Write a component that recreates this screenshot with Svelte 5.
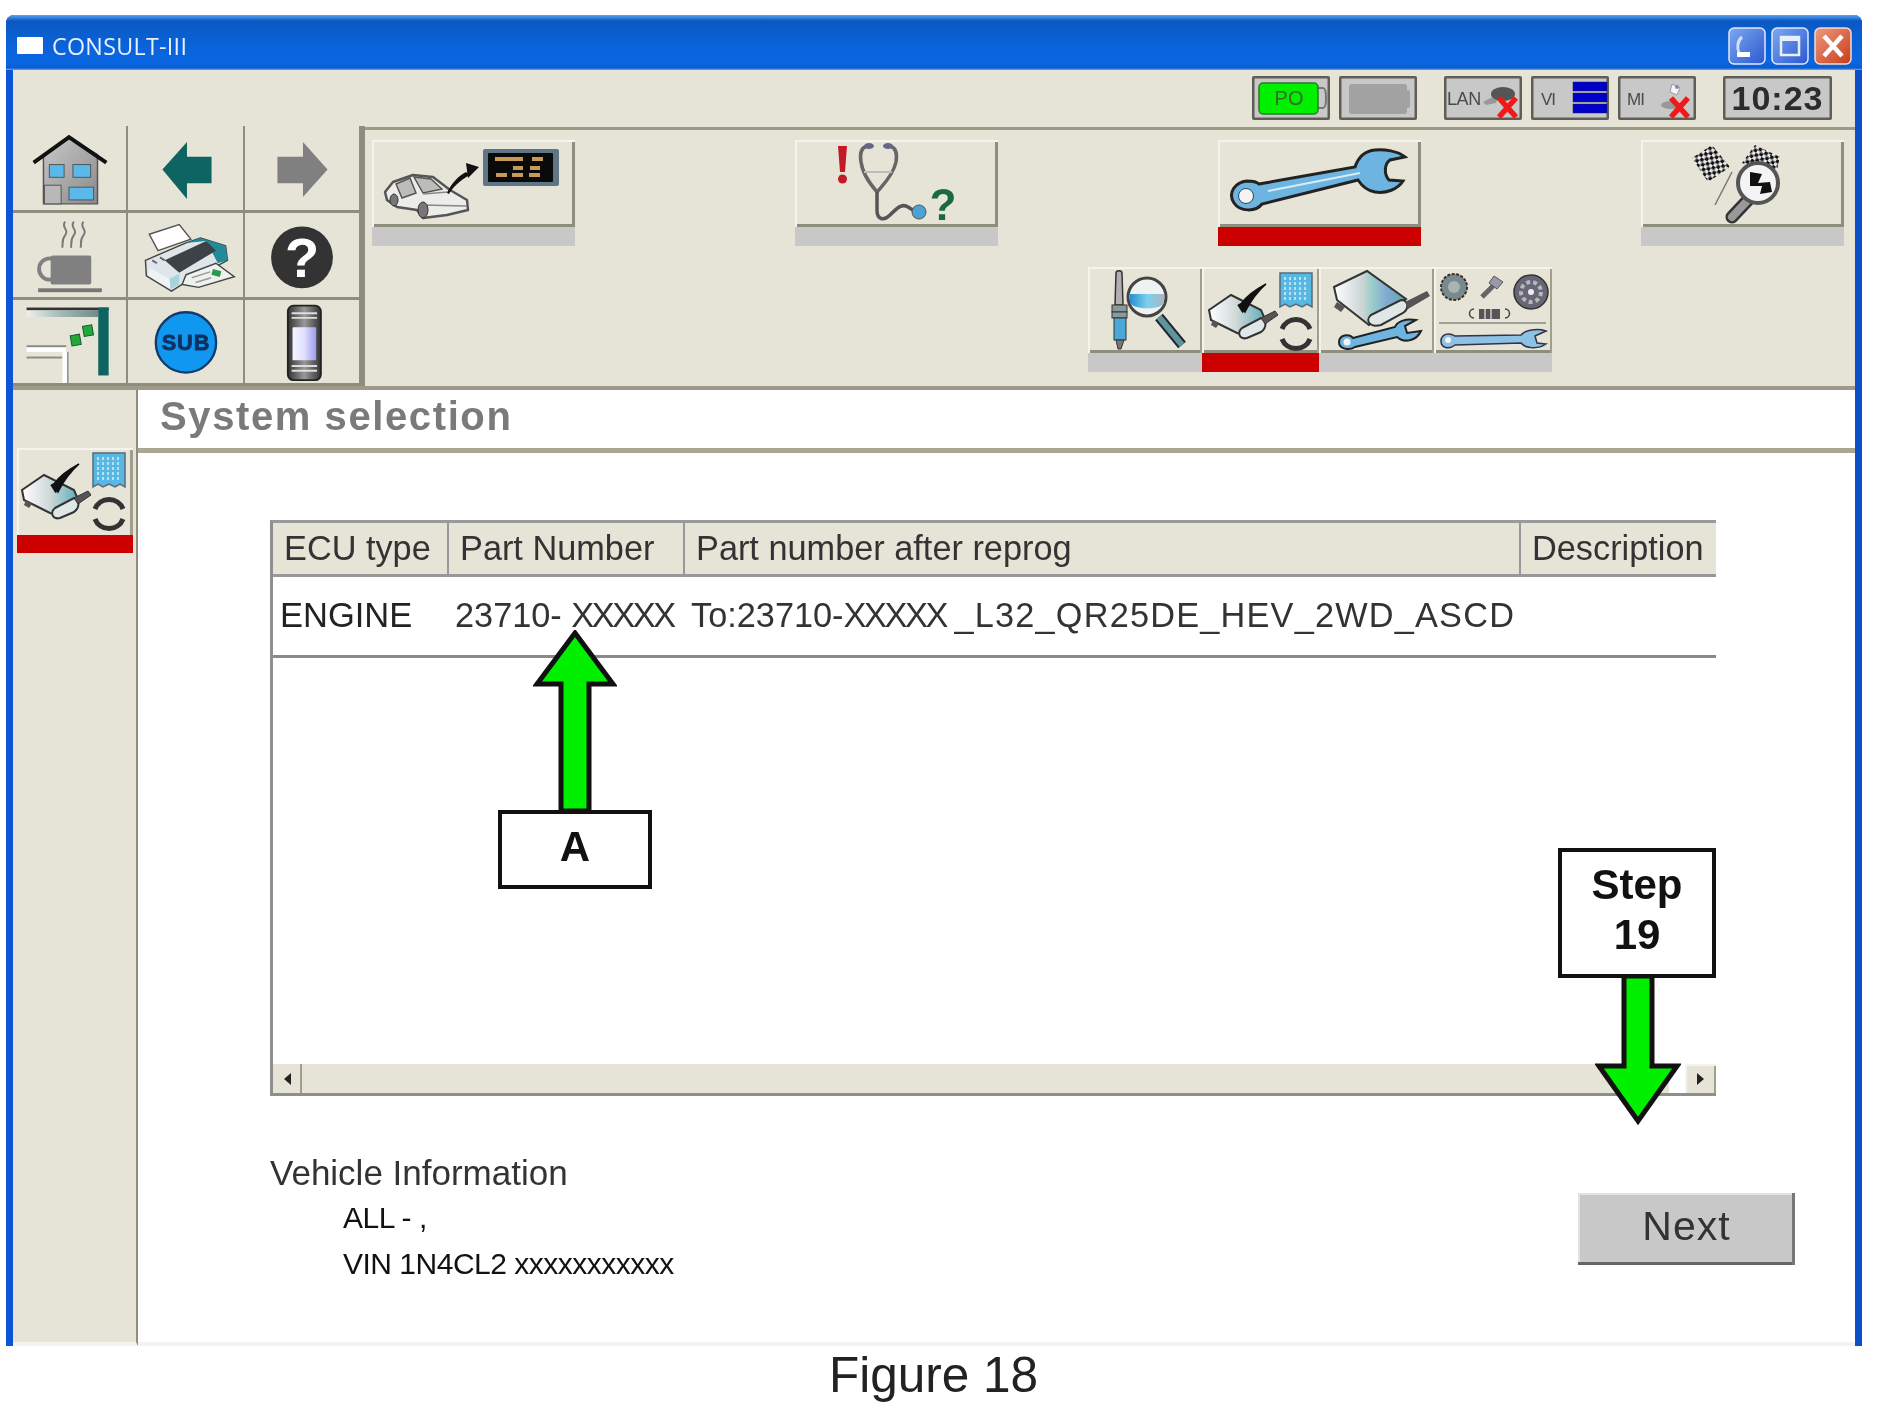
<script>
  const headers = ['ECU type', 'Part Number', 'Part number after reprog', 'Description'];
</script>

{#snippet moduleIcon()}
  <path d="M1210,310 L1232,295 L1262,310 L1265,317 L1245,335 L1238,333 L1212,320 Z" fill="url(#silver)" stroke="#333" stroke-width="2"/>
  <path d="M1243,328 L1262,318 C1268,318 1268,328 1262,332 L1248,338 C1240,340 1238,332 1243,328Z" fill="#dfe8e6" stroke="#333" stroke-width="2"/>
  <path d="M1262,318 L1276,311 L1279,315 L1266,324 Z" fill="#555" stroke="#333"/>
  <path d="M1214,320 l6,4 -3,4 -5,-3z" fill="#555"/>
  <path d="M1242,304 C1246,298 1256,290 1267,284 C1258,292 1251,302 1246,312 Z" fill="#111" stroke="#111" stroke-width="1.500"/>
  <path d="M1240,304 l5,8" stroke="#111" stroke-width="4"/>
  <path d="M1281,273 H1313 V307 L1308,304 L1303,307 L1297,304 L1291,307 L1286,304 L1281,307 Z" fill="#58b8e4" stroke="#5a6a7a" stroke-width="1.500"/>
  <g stroke="#d8eef8" stroke-width="1.500" stroke-dasharray="3 2">
    <path d="M1286,277V302M1291,277V302M1296,277V302M1301,277V302M1306,277V302"/>
  </g>
  <path d="M1283,329 A15,15 0 0 1 1311,329" fill="none" stroke="#333" stroke-width="5"/>
  <path d="M1311,339 A15,15 0 0 1 1283,339" fill="none" stroke="#333" stroke-width="5"/>
{/snippet}

<div class="page">
  <svg class="defs" width="0" height="0" aria-hidden="true">
    <defs>
      <linearGradient id="silver" x1="0" y1="0" x2="1" y2="0"><stop offset="0" stop-color="#fff"/><stop offset=".5" stop-color="#d0d8d8"/><stop offset="1" stop-color="#62aebc"/></linearGradient>
      <linearGradient id="silver2" x1="0" y1="0" x2="1" y2="0"><stop offset="0" stop-color="#fff"/><stop offset=".42" stop-color="#c8d2d2"/><stop offset=".5" stop-color="#9fd0cc"/><stop offset=".75" stop-color="#7fa8d0"/><stop offset="1" stop-color="#5fa8ac"/></linearGradient>
      <linearGradient id="house" x1="0" y1="0" x2="1" y2="1"><stop offset="0" stop-color="#c8c8c8"/><stop offset="1" stop-color="#8a8a8a"/></linearGradient>
      <linearGradient id="btnblue" x1="0" y1="0" x2="1" y2="1"><stop offset="0" stop-color="#7fa8f0"/><stop offset="1" stop-color="#2a58d0"/></linearGradient>
      <linearGradient id="btnred" x1="0" y1="0" x2="1" y2="1"><stop offset="0" stop-color="#ee9a80"/><stop offset="1" stop-color="#c83c18"/></linearGradient>
      <linearGradient id="screen" x1="0" y1="0" x2="1" y2="0"><stop offset="0" stop-color="#f4f4ff"/><stop offset=".5" stop-color="#e0e0ff"/><stop offset="1" stop-color="#9c9cf0"/></linearGradient>
      <linearGradient id="bar" x1="0" y1="0" x2="1" y2="0"><stop offset="0" stop-color="#f0f0f0"/><stop offset=".5" stop-color="#9fb8b4"/><stop offset="1" stop-color="#6f8a88"/></linearGradient>
      <linearGradient id="lensblue" x1="0" y1="0" x2="1" y2="0"><stop offset="0" stop-color="#2a8ed0"/><stop offset=".5" stop-color="#7cd0ee"/><stop offset="1" stop-color="#a8b8c0"/></linearGradient>
      <linearGradient id="phone" x1="0" y1="0" x2="1" y2="0"><stop offset="0" stop-color="#333"/><stop offset=".5" stop-color="#999"/><stop offset="1" stop-color="#333"/></linearGradient>
      <pattern id="check" width="7" height="7" patternUnits="userSpaceOnUse" patternTransform="rotate(35)"><rect width="7" height="7" fill="#e8e8e8"/><rect width="3.500" height="3.500" fill="#111"/><rect x="3.500" y="3.500" width="3.500" height="3.500" fill="#111"/></pattern>
    </defs>
  </svg>

  <div class="window">
    <header class="titlebar">
      <span class="appicon"></span>
      <span class="apptitle">CONSULT-III</span>
      <div class="winbtns">
        <svg class="wb" viewBox="0 0 38 38"><rect x="1" y="1" width="36" height="36" rx="5" fill="url(#btnblue)" stroke="#dfe8ff" stroke-width="1.500"/><rect x="9" y="25" width="13" height="5" fill="#fff"/><path d="M14,10 C9,14 9,22 11,25" fill="none" stroke="#cfe0ff" stroke-width="3"/></svg>
        <svg class="wb" viewBox="0 0 38 38"><rect x="1" y="1" width="36" height="36" rx="5" fill="url(#btnblue)" stroke="#dfe8ff" stroke-width="1.500"/><rect x="10" y="10" width="18" height="18" fill="none" stroke="#e8f0ff" stroke-width="2.500"/><rect x="10" y="10" width="18" height="4" fill="#e8f0ff"/></svg>
        <svg class="wb" viewBox="0 0 38 38"><rect x="1" y="1" width="36" height="36" rx="5" fill="url(#btnred)" stroke="#f2dcd4" stroke-width="1.500"/><path d="M10,9 L28,29 M28,9 L10,29" stroke="#fff" stroke-width="4.500"/></svg>
      </div>
    </header>

    <div class="statusbar">
      <div class="stat">
        <svg viewBox="1252 77 78 44">
          <path d="M1316,89 h7 c4,0 4,20 0,20 h-7" fill="none" stroke="#777" stroke-width="2"/>
          <rect x="1259" y="84" width="59" height="31" rx="4" fill="#00f000" stroke="#2a7a2a" stroke-width="1.500"/>
          <text x="1289" y="106" text-anchor="middle" class="st po">PO</text>
        </svg>
      </div>
      <div class="stat">
        <svg viewBox="1339 77 78 44">
          <rect x="1349" y="85" width="58" height="30" rx="3" fill="#a2a2a2"/>
          <rect x="1405" y="91" width="5" height="18" rx="2" fill="#a2a2a2"/>
        </svg>
      </div>
      <div class="stat sep">
        <svg viewBox="1444 77 78 44">
          <text x="1447" y="106" class="st lan">LAN</text>
          <path d="M1483,103 L1500,94 L1496,104 L1486,106 Z" fill="#999"/>
          <ellipse cx="1503" cy="95" rx="12" ry="7" fill="#555"/>
          <path d="M1499,99 L1516,118 M1516,99 L1499,118" stroke="#f01818" stroke-width="5.500"/>
        </svg>
      </div>
      <div class="stat">
        <svg viewBox="1531 77 78 44">
          <text x="1541" y="106" class="st mi">VI</text>
          <rect x="1573" y="83" width="34" height="9" fill="#0000c8" stroke="#224" stroke-width=".5"/>
          <rect x="1573" y="94" width="34" height="9" fill="#0000c8" stroke="#224" stroke-width=".5"/>
          <rect x="1573" y="105" width="34" height="9" fill="#0000c8" stroke="#224" stroke-width=".5"/>
        </svg>
      </div>
      <div class="stat">
        <svg viewBox="1618 77 78 44">
          <text x="1627" y="106" class="st mi">MI</text>
          <ellipse cx="1671" cy="106" rx="10" ry="4" fill="#999"/>
          <path d="M1672,85 l8,4 -3,7 -7,-3z" fill="#f4f4f4" stroke="#99a" />
          <circle cx="1677" cy="88" r="2" fill="#88a"/>
          <path d="M1671,99 L1688,118 M1688,99 L1671,118" stroke="#f01818" stroke-width="5.500"/>
        </svg>
      </div>
      <div class="clock">10:23</div>
    </div>

    <div class="tools">
      <div class="navgrid">
        <button class="cell" aria-label="Home"><svg viewBox="13 126 115 85">
          <path d="M44,155 L70,138 L99,155 V205 H44 Z" fill="url(#house)" stroke="#555" stroke-width="1.500"/>
          <path d="M34,163 L70,137 L108,163" fill="none" stroke="#111" stroke-width="4"/>
          <rect x="50" y="165" width="15" height="13" fill="#5ab8ea" stroke="#555"/><rect x="74" y="165" width="18" height="13" fill="#5ab8ea" stroke="#555"/>
          <rect x="45" y="186" width="17" height="19" fill="#b8b8b8" stroke="#555"/><rect x="70" y="188" width="25" height="13" fill="#5ab8ea" stroke="#555"/>
        </svg></button>
        <button class="cell" aria-label="Back"><svg viewBox="128 126 117 85"><path d="M163,170 L188,142 V157 H213 V184 H188 V200 Z" fill="#0d6460"/></svg></button>
        <button class="cell" aria-label="Forward"><svg viewBox="245 126 116 85"><path d="M329,170 L304,142 V157 H278 V184 H304 V198 Z" fill="#808080"/></svg></button>

        <button class="cell" aria-label="Sleep"><svg viewBox="13 211 115 87">
          <path d="M66,220 c-5,6 5,8 0,14 c-4,5 -2,9 -3,13 M75,220 c-5,6 5,8 0,14 c-4,5 -2,9 -3,13 M85,220 c-5,6 5,8 0,14 c-4,5 -2,9 -3,13" fill="none" stroke="#777" stroke-width="2"/>
          <rect x="51" y="255" width="42" height="30" rx="2" fill="#808080"/>
          <ellipse cx="50" cy="269" rx="11" ry="11" fill="none" stroke="#808080" stroke-width="4"/>
          <rect x="38" y="289" width="66" height="4" fill="#777"/>
        </svg></button>
        <button class="cell" aria-label="Print"><svg viewBox="128 211 117 87">
          <path d="M149,233 L180,223 L192,238 L158,250 Z" fill="#fff" stroke="#555" stroke-width="1.500"/>
          <path d="M145,260 L187,242 L202,237 L228,245 L230,260 L183,285 L172,292 L146,276 Z" fill="#dfe6ea" stroke="#444" stroke-width="1.500"/>
          <path d="M149,268 L170,279 L171,290 L148,276 Z" fill="#eef4f6"/>
          <path d="M170,279 L180,274 L180,285 L171,290 Z" fill="#a9d4de"/>
          <path d="M187,242 L202,237 L228,245 L230,260 L220,263 L208,240 Z" fill="#238a9a"/>
          <path d="M165,260 L208,240 L218,250 L180,273 Z" fill="#3c4246"/>
          <path d="M187,275 L218,263 L237,277 L200,288 L183,285 Z" fill="#eef2ee" stroke="#444" stroke-width="1.500"/>
          <rect x="214" y="270" width="9" height="6" fill="#2a9a48" transform="rotate(15 218 273)"/>
          <path d="M193,278 L212,272 M197,283 L213,278" stroke="#999" stroke-width="1.500"/>
          <path d="M152,260 l5,3 M160,257 l5,3" stroke="#667" stroke-width="2"/>
        </svg></button>
        <button class="cell" aria-label="Help"><svg viewBox="245 211 116 87">
          <circle cx="303" cy="257" r="32" fill="#333"/>
          <text x="303" y="277" text-anchor="middle" class="qmark">?</text>
        </svg></button>

        <button class="cell" aria-label="Windows"><svg viewBox="13 298 115 88">
          <rect x="25" y="306" width="87" height="3" fill="#333"/>
          <rect x="25" y="309" width="76" height="7" fill="url(#bar)"/>
          <rect x="101" y="306" width="11" height="72" fill="#0d6460"/>
          <rect x="25" y="348" width="42" height="5" fill="#fff"/>
          <rect x="25" y="346" width="42" height="2" fill="#888"/>
          <rect x="25" y="358" width="38" height="2" fill="#888"/>
          <rect x="63" y="353" width="5" height="33" fill="#fff"/>
          <rect x="68" y="353" width="1.500" height="33" fill="#888"/>
          <rect x="85" y="325" width="10" height="11" fill="#22a838" stroke="#153" transform="rotate(-10 90 330)"/>
          <rect x="72" y="335" width="10" height="11" fill="#22a838" stroke="#153" transform="rotate(-10 77 340)"/>
        </svg></button>
        <button class="cell" aria-label="Sub"><svg viewBox="128 298 117 88">
          <circle cx="187" cy="343" r="32" fill="#1098f0" stroke="#123a6a" stroke-width="2.500"/>
          <text x="187" y="351" text-anchor="middle" class="subt">SUB</text>
        </svg></button>
        <button class="cell" aria-label="Device"><svg viewBox="245 298 116 88">
          <rect x="288" y="304" width="35" height="79" rx="6" fill="url(#phone)" stroke="#222" stroke-width="2"/>
          <path d="M292,312 H319 M292,317 H319 M292,368 H319 M292,373 H319" stroke="#ddd" stroke-width="2"/>
          <rect x="293" y="327" width="25" height="35" rx="1" fill="url(#screen)"/>
        </svg></button>
      </div>

      <div class="toolpanel">
        <div class="mainbtns">
          <div class="tab">
            <button class="tbtn" aria-label="Vehicle"><svg viewBox="372 140 203 87">
              <path d="M385,192 L393,182 L413,175 L433,177 L450,190 L467,200 L468,210 L447,215 L423,218 L417,210 L397,207 L387,200 Z" fill="#ecece8" stroke="#555" stroke-width="2.500" stroke-linejoin="round"/>
              <path d="M396,184 L410,178 L416,193 L402,198 Z M414,177 L431,179 L442,189 L423,193 Z" fill="#bdbdb8" stroke="#555" stroke-width="1.500"/>
              <path d="M423,194 L448,192 M422,205 L466,206" stroke="#888" stroke-width="1.500"/>
              <ellipse cx="394" cy="200" rx="4" ry="6" fill="#777" stroke="#333"/>
              <ellipse cx="423" cy="210" rx="5" ry="8" fill="#777" stroke="#333"/>
              <path d="M447,193 C451,184 458,176 466,172 L470,175 C460,180 452,188 449,194 Z" fill="#111"/>
              <path d="M466,163 L479,167 L468,178 Z" fill="#111"/>
              <rect x="483" y="149" width="76" height="37" rx="2" fill="#5f7585"/>
              <rect x="488" y="153" width="65" height="29" rx="1" fill="#0a0a0a"/>
              <path d="M495,159 H523 M532,159 H543 M513,168 H523 M530,168 H540 M496,175 H507 M512,175 H523 M529,175 H540" stroke="#c89a58" stroke-width="4"/>
            </svg></button>
            <div class="under"></div>
          </div>
          <div class="tab">
            <button class="tbtn" aria-label="Diagnosis"><svg viewBox="795 140 203 87">
              <path d="M838,146 H847 L845,172 H840 Z" fill="#c41a28"/><circle cx="842.500" cy="179" r="4.500" fill="#c41a28"/>
              <path d="M867,146 C860,148 860,156 861,162 C863,176 872,186 877,192 C882,186 893,176 896,162 C897,156 897,148 890,146" fill="none" stroke="#666" stroke-width="3.500"/>
              <path d="M864,172 H892" stroke="#bbb" stroke-width="2"/>
              <path d="M877,192 V210 C877,220 884,221 890,215 C897,208 902,203 908,207 L916,212" fill="none" stroke="#555" stroke-width="3.500"/>
              <ellipse cx="869" cy="146" rx="5" ry="3" fill="#668"/><ellipse cx="888" cy="146" rx="5" ry="3" fill="#668"/>
              <circle cx="919" cy="212" r="7" fill="#4aa3d4" stroke="#555" stroke-width="1"/>
              <text x="943" y="220" text-anchor="middle" class="gq">?</text>
            </svg></button>
            <div class="under"></div>
          </div>
          <div class="tab">
            <button class="tbtn" aria-label="Repair"><svg viewBox="1218 140 203 87">
              <path d="M1259,184 L1355,167 C1358,158 1364,151 1375,150 C1384,149 1398,151 1405,157 L1390,160 C1384,164 1384,175 1389,180 L1403,181 C1398,189 1386,194 1375,192 C1368,191 1362,186 1358,180 L1262,204 C1256,212 1240,212 1234,203 C1227,192 1236,182 1247,181 C1252,181 1257,182 1259,184 Z" fill="#6db4e0" stroke="#222" stroke-width="3"/>
              <circle cx="1246" cy="196" r="7.500" fill="#f4f4f4" stroke="#345"/>
              <path d="M1268,191 L1360,173" stroke="#d5ecf8" stroke-width="2"/>
            </svg></button>
            <div class="under red"></div>
          </div>
          <div class="tab">
            <button class="tbtn" aria-label="Finish"><svg viewBox="1641 140 203 87">
              <path d="M1692,158 L1712,145 L1730,167 L1708,182 Z" fill="url(#check)"/>
              <path d="M1742,163 L1755,145 L1780,157 L1777,170 L1760,170 Z" fill="url(#check)"/>
              <path d="M1732,172 L1715,205" stroke="#777" stroke-width="1.500"/>
              <path d="M1748,200 L1732,217" stroke="#333" stroke-width="13" stroke-linecap="round"/>
              <path d="M1748,200 L1732,217" stroke="#999" stroke-width="8" stroke-linecap="round"/>
              <circle cx="1758" cy="183" r="20" fill="#f4f4f4" stroke="#555" stroke-width="4"/>
              <path d="M1750,172 L1762,174 L1758,183 L1770,182 L1772,192 L1760,194 L1762,186 L1750,186 Z" fill="#111"/>
            </svg></button>
            <div class="under"></div>
          </div>
        </div>

        <div class="subbtns">
          <div class="tab">
            <button class="sbtn s1" aria-label="Inspect"><svg viewBox="1089 267 114 86">
              <path d="M1117,273 C1117,270 1123,270 1123,273 L1124,305 H1116 Z" fill="#b0b0b0" stroke="#333" stroke-width="1.500"/>
              <rect x="1113" y="305" width="15" height="7" fill="#8a9a9c" stroke="#333"/>
              <rect x="1113" y="312" width="15" height="6" fill="#8a9a9c" stroke="#333"/>
              <rect x="1115" y="318" width="12" height="22" fill="#4aa8d8" stroke="#333"/>
              <path d="M1117,340 h8 l-3,9 h-3z" fill="#777" stroke="#333"/>
              <path d="M1160,317 L1183,345" stroke="#223" stroke-width="10"/>
              <path d="M1160,317 L1183,345" stroke="#5f949a" stroke-width="6"/>
              <circle cx="1148" cy="297" r="19" fill="#eef2f2" stroke="#444" stroke-width="3"/>
              <path d="M1131,294 H1165 V303 C1162,310 1135,310 1131,303 Z" fill="url(#lensblue)"/>
            </svg></button>
            <div class="under"></div>
          </div>
          <div class="tab">
            <button class="sbtn s2" aria-label="Reprogramming"><svg viewBox="1203 267 117 86">{@render moduleIcon()}</svg></button>
            <div class="under red"></div>
          </div>
          <div class="tab">
            <button class="sbtn s3" aria-label="Module repair"><svg viewBox="1320 267 115 86">
              <path d="M1335,287 L1368,271 L1407,299 L1370,325 L1338,300 Z" fill="url(#silver2)" stroke="#333" stroke-width="2"/>
              <path d="M1372,315 L1402,300 C1410,300 1410,309 1404,313 L1382,325 C1370,328 1366,320 1372,315Z" fill="#dfe8e6" stroke="#333" stroke-width="2"/>
              <path d="M1406,302 L1428,291 L1431,296 L1409,309 Z" fill="#555"/>
              <path d="M1338,302 l8,5 -4,5 -7,-5z" fill="#555"/>
              <path d="M1354,338 L1396,327 C1398,322 1406,318 1417,320 L1406,326 L1408,333 L1422,331 C1418,340 1406,344 1398,337 L1356,347 C1350,351 1340,349 1340,342 C1340,335 1350,333 1354,338Z" fill="#6db4e0" stroke="#222" stroke-width="2"/>
              <circle cx="1348" cy="342" r="3.500" fill="#f4f4f4"/>
            </svg></button>
            <div class="under"></div>
          </div>
          <div class="tab">
            <button class="sbtn s4" aria-label="Service"><svg viewBox="1435 267 118 86">
              <circle cx="1455" cy="287" r="13" fill="#7a8a8c" stroke="#333" stroke-width="2" stroke-dasharray="3 1.500"/><circle cx="1455" cy="287" r="6" fill="#a8b4b4"/>
              <path d="M1483,297 L1497,283" stroke="#666" stroke-width="5"/>
              <path d="M1495,276 l9,6 -6,7 -8,-6z" fill="#99a" stroke="#555"/>
              <circle cx="1532" cy="292" r="17" fill="#667" stroke="#333" stroke-width="1.500"/>
              <circle cx="1532" cy="292" r="10" fill="none" stroke="#b8b8b8" stroke-width="4" stroke-dasharray="4 3"/>
              <circle cx="1532" cy="292" r="3" fill="#eee"/>
              <path d="M1475,309 C1469,309 1469,318 1475,318 M1506,309 C1512,309 1512,318 1506,318" fill="none" stroke="#444" stroke-width="1.500"/>
              <rect x="1480" y="309" width="21" height="10" fill="#555"/>
              <path d="M1486,309 V319 M1492,309 V319" stroke="#ccc" stroke-width="1.500"/>
              <path d="M1440,323 H1547" stroke="#a0a098" stroke-width="2"/>
              <path d="M1456,336 L1522,335 C1526,330 1538,328 1547,331 L1536,336 L1538,343 L1547,344 C1538,350 1526,348 1522,343 L1456,345 C1450,350 1442,348 1442,341 C1442,334 1450,332 1456,336Z" fill="#8dc2e4" stroke="#334" stroke-width="1.500"/>
              <circle cx="1449" cy="340" r="3" fill="#f4f4f4"/>
            </svg></button>
            <div class="under"></div>
          </div>
        </div>
      </div>
    </div>

    <div class="body">
      <aside class="sidebar">
        <div class="tab sidetab">
          <button class="sidebtn" aria-label="Reprogramming"><svg viewBox="1205 268 116 87">{@render moduleIcon()}</svg></button>
          <div class="under red side"></div>
        </div>
      </aside>
      <main class="main">
        <h1 class="heading">System selection</h1>
        <div class="content">
          <div class="table">
            <div class="thead">
              {#each headers as h}<div class="th">{h}</div>{/each}
            </div>
            <div class="row">
              <div class="td c1">ENGINE</div>
              <div class="td c2">23710- <span class="xs">XXXXX</span></div>
              <div class="td c3">To:23710-<span class="xs">XXXXX</span> <span class="wide">_L32_QR25DE_HEV_2WD_ASCD</span></div>
            </div>
            <div class="blank"></div>
            <div class="scroll">
              <span class="sb left"><i></i></span>
              <span class="track"></span>
              <span class="sb right"><i></i></span>
            </div>
          </div>
          <div class="foot">
            <div class="vehicle">
              <div class="vt">Vehicle Information</div>
              <div class="vl">ALL - ,</div>
              <div class="vl">VIN 1N4CL2 xxxxxxxxxxx</div>
            </div>
            <button class="next">Next</button>
          </div>
        </div>
      </main>
    </div>
  </div>

  <div class="caption">Figure 18</div>

  <svg class="arrow a-up" viewBox="0 0 84 184"><path d="M42,3 L80,54 H56 V181 H28 V54 H4 Z" fill="#00f000" stroke="#111" stroke-width="5"/></svg>
  <div class="callout ca">A</div>
  <svg class="arrow a-down" viewBox="0 0 86 150"><path d="M29,0 H57 V90 H82 L43,145 L4,90 H29 Z" fill="#00f000" stroke="#111" stroke-width="5"/></svg>
  <div class="callout cs">Step<br />19</div>
</div>

<style>
  :global(body) { margin: 0; background: #fff; }
  * { box-sizing: border-box; }
  .page {
    position: relative;
    width: 1893px;
    height: 1421px;
    padding: 15px 31px 0 6px;
    background: #fff;
    font-family: "Liberation Sans", Arial, sans-serif;
    filter: blur(0.7px);
    overflow: hidden;
  }
  .defs { position: absolute; }
  button { padding: 0; margin: 0; border: 0; background: none; font: inherit; display: block; }
  svg { display: block; }

  .window {
    height: 1331px;
    display: flex;
    flex-direction: column;
    background: #e6e4d6;
    border-left: 7px solid #0d55d8;
    border-right: 7px solid #0d4fc8;
    border-radius: 8px 8px 0 0;
  }
  .titlebar {
    flex: 0 0 55px;
    margin: 0 -7px;
    padding: 6px 10px 0 11px;
    display: flex;
    align-items: center;
    border-radius: 8px 8px 0 0;
    background: linear-gradient(#5aa4f0 0, #0a56c4 6px, #0a5cc8 13px, #0a62d8 29px, #0a66e2 47px, #0a5cd0 53px, #7ba8ea 55px);
  }
  .appicon { width: 26px; height: 17px; background: #fff; border-radius: 1px; margin-right: 9px; }
  .apptitle { color: #e8f0ff; font-family: "Open Sans", sans-serif; font-size: 24px; letter-spacing: .3px; transform: scaleX(.97); transform-origin: left; }
  .winbtns { margin-left: auto; display: flex; gap: 5px; }
  .wb { width: 38px; height: 38px; }

  .statusbar {
    flex: 0 0 56px;
    display: flex;
    align-items: center;
    justify-content: flex-end;
    gap: 9px;
    padding: 0 23px 0 0;
  }
  .stat {
    width: 78px;
    height: 44px;
    background: #c8c8c8;
    box-shadow: inset 0 0 0 2.500px #5e5e56;
    border-radius: 2px;
  }
  .stat svg { width: 78px; height: 44px; overflow: hidden; }
  .stat.sep { margin-left: 18px; }
  .st { font-family: "Liberation Sans", sans-serif; fill: #4a4a4a; }
  .po { font-size: 20px; fill: #3a6a2a; }
  .lan { font-size: 18px; letter-spacing: -.4px; }
  .mi { font-size: 17px; letter-spacing: -1px; }
  .clock {
    width: 109px;
    height: 44px;
    margin-left: 18px;
    background: #c8c8c8;
    box-shadow: inset 0 0 0 2.500px #5e5e56;
    border-radius: 2px;
    display: flex;
    align-items: center;
    justify-content: center;
    font-size: 34px;
    font-weight: bold;
    letter-spacing: 1px;
    color: #2c2c2c;
  }

  .tools {
    flex: 0 0 264px;
    display: flex;
    border-bottom: 4px solid #9c9b88;
  }
  .navgrid {
    flex: 0 0 348px;
    display: grid;
    grid-template-columns: 115px 117px 116px;
    grid-template-rows: 87px 87px 86px;
    border-right: 4px solid #8f8e7c;
  }
  .cell {
    width: 100%;
    height: 100%;
    border-right: 2.500px solid #8f8e7c;
    border-bottom: 3px solid #8f8e7c;
    overflow: hidden;
  }
  .cell svg { width: 100%; height: 100%; }
  .toolpanel {
    flex: 1;
    padding: 10px 11px 0 7px;
    border-top: 3px solid #9c9b88;
    margin-top: 1px;
  }
  .mainbtns { display: flex; justify-content: space-between; }
  .tab { display: flex; flex-direction: column; }
  .tbtn {
    width: 203px;
    height: 87px;
    box-shadow: inset 2px 2px 0 #f5f4ec, inset -3px 0 0 #8f8e7c, inset 0 -3px 0 #8f8e7c;
  }
  .tbtn svg { width: 203px; height: 87px; overflow: visible; }
  .under { height: 19px; background: #c8c8c8; }
  .under.red { background: #cc0000; }
  .subbtns { display: flex; margin: 21px 0 0 716px; }
  .sbtn { height: 86px; box-shadow: inset 2px 2px 0 #f5f4ec, inset -2px 0 0 #a09f8c, inset 0 -3px 0 #8f8e7c; }
  .s1 { width: 114px; }
  .s2 { width: 117px; }
  .s3 { width: 115px; }
  .s4 { width: 118px; }
  .sbtn svg { width: 100%; height: 86px; }

  .body { flex: 1; display: flex; min-height: 0; }
  .sidebar {
    flex: 0 0 125px;
    padding: 58px 0 0 4px;
    border-right: 2px solid #8f8e7c;
    border-bottom: 4px solid #f4f3ee;
  }
  .sidetab { width: 116px; }
  .sidebtn { width: 116px; height: 87px; box-shadow: inset 2px 2px 0 #f5f4ec, inset -3px 0 0 #a09f8c; }
  .sidebtn svg { width: 116px; height: 87px; }
  .under.side { height: 18px; }

  .main { flex: 1; background: #fff; display: flex; flex-direction: column; min-width: 0; border-bottom: 4px solid #f4f3ee; }
  .heading {
    margin: 0;
    height: 63px;
    padding: 0 0 6px 22px;
    display: flex;
    align-items: center;
    font-size: 40px;
    font-weight: bold;
    letter-spacing: 1.600px;
    color: #7a7a7a;
    border-bottom: 5px solid #a8a794;
  }
  .content { flex: 1; padding: 67px 60px 0 132px; display: flex; flex-direction: column; }
  .table {
    width: 1446px;
    height: 576px;
    display: flex;
    flex-direction: column;
    border-left: 3px solid #8f8f8f;
    border-top: 3px solid #999;
    border-bottom: 3px solid #8f8f8a;
    font-size: 34.300px;
    color: #333;
  }
  .thead {
    flex: 0 0 54px;
    display: grid;
    grid-template-columns: 176px 236px 836px 1fr;
    background: #e6e4d6;
    border-bottom: 3px solid #999;
  }
  .th { padding: 0 0 0 11px; display: flex; align-items: center; border-right: 2px solid #999; white-space: nowrap; }
  .th:last-child { border-right: 0; padding-left: 11px; }
  .row {
    flex: 0 0 81px;
    display: grid;
    grid-template-columns: 176px 236px 1fr;
    border-bottom: 3px solid #8a8a8a;
    align-items: center;
    padding-bottom: 2px;
  }
  .td { white-space: nowrap; }
  .c1 { padding-left: 7px; color: #222; font-size: 34.500px; }
  .c2 { padding-left: 6px; }
  .c3 { padding-left: 6px; }
  .xs { letter-spacing: -2.400px; }
  .wide { letter-spacing: 1.200px; margin-left: -1px; }
  .blank { flex: 1; }
  .scroll { flex: 0 0 29px; display: flex; align-items: stretch; }
  .sb { width: 31px; display: flex; align-items: center; justify-content: center; background: #e6e4d6; box-shadow: inset -2px 0 0 #a09f8c; }
  .sb.left { width: 29px; }
  .sb i { width: 0; height: 0; border-top: 6px solid transparent; border-bottom: 6px solid transparent; }
  .left i { border-right: 7px solid #222; }
  .right i { border-left: 7px solid #222; }
  .sb.right { margin-left: 16px; box-shadow: inset 2px 2px 0 #f5f4ec, inset -2px 0 0 #a09f8c; }
  .track { flex: 1; background: #e6e4d6; }

  .foot { flex: 1; display: flex; justify-content: space-between; align-items: flex-start; }
  .vehicle { padding-top: 55px; color: #222; }
  .vt { height: 44px; line-height: 44px; font-size: 35px; color: #333; }
  .vl { height: 46px; line-height: 46px; padding-left: 73px; font-size: 30px; letter-spacing: -.5px; color: #111; }
  .next {
    width: 217px;
    height: 72px;
    margin-top: 97px;
    padding-bottom: 6px;
    background: #c8c8c8;
    box-shadow: inset -3px 0 0 #777, inset 0 -3px 0 #666, inset 2px 2px 0 #e2e2e2;
    font-size: 41px;
    letter-spacing: 1px;
    color: #333;
  }

  .caption { text-align: center; padding-right: 1px; font-size: 49.500px; color: #222; }

  .arrow { position: absolute; }
  .a-up { left: 533px; top: 630px; width: 84px; height: 184px; }
  .a-down { left: 1595px; top: 976px; width: 86px; height: 150px; }
  .callout {
    position: absolute;
    background: #fff;
    border: 4px solid #111;
    color: #111;
    font-weight: bold;
    display: flex;
    align-items: center;
    justify-content: center;
    text-align: center;
    font-size: 42px;
    line-height: 50px;
    padding-bottom: 6px;
  }
  .ca { left: 498px; top: 810px; width: 154px; height: 79px; }
  .cs { left: 1558px; top: 848px; width: 158px; height: 130px; }

  .qmark { font-size: 58px; font-weight: bold; fill: #fff; font-family: "Liberation Sans", sans-serif; }
  .subt { font-size: 23px; font-weight: bold; fill: #103060; letter-spacing: 1px; font-family: "Liberation Sans", sans-serif; stroke: #103060; stroke-width: .8px; }
  .gq { font-size: 44px; font-weight: bold; fill: #1a6a40; font-family: "Liberation Sans", sans-serif; }
</style>
